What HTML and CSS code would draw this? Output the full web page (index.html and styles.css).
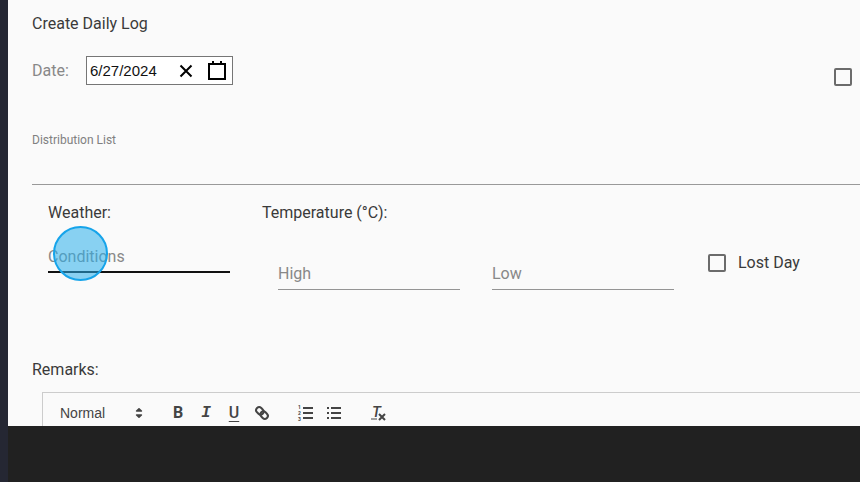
FILE: index.html
```
<!DOCTYPE html>
<html lang="en">
<head>
    <meta charset="UTF-8">
    <meta name="viewport" content="width=device-width, initial-scale=1.0">
    <title>Create Daily Log</title>
    <link rel="stylesheet" href="styles.css">
</head>
<body>
    <main class="page">
        <form class="log-form">
            <h1>Create Daily Log</h1>

            <div class="date-row">
                <label class="date-label" for="logDate">Date:</label>
                <div class="date-picker">
                    <input type="text" id="logDate" value="6/27/2024">
                    <button type="button" aria-label="Clear date">
                        <svg width="14" height="14" viewBox="0 0 14 14"><path d="M1.5 1.5l11 11M12.5 1.5l-11 11" stroke="#000" stroke-width="2" fill="none"/></svg>
                    </button>
                    <button type="button" aria-label="Open calendar">
                        <svg width="18" height="20" viewBox="0 0 18 20"><path d="M1 3h16v15H1z" stroke="#000" stroke-width="2" fill="none"/><path d="M4 0h2v4H4zM12 0h2v4h-2z"/></svg>
                    </button>
                </div>
                <input type="checkbox" class="box date-check" aria-label="Select log">
            </div>

            <div class="distribution">
                <label for="distribution">Distribution List</label>
                <input type="text" id="distribution">
            </div>

            <div class="weather">
                <div class="col">
                    <label for="conditions">Weather:</label>
                    <div class="conditions">
                        <input type="text" class="line-input active" id="conditions" placeholder="Conditions">
                        <span class="click-marker"></span>
                    </div>
                </div>
                <div class="col temperature">
                    <label for="high">Temperature (°C):</label>
                    <input type="text" class="line-input" id="high" placeholder="High">
                </div>
                <div class="col low">
                    <input type="text" class="line-input" id="low" placeholder="Low" aria-label="Low">
                </div>
                <label class="lost-day"><input type="checkbox" class="box"> Lost Day</label>
            </div>

            <h2>Remarks:</h2>
            <div class="editor">
                <div class="toolbar">
                    <div class="format">
                        <select aria-label="Text style">
                            <option>Normal</option>
                            <option>Heading</option>
                        </select>
                        <svg width="8" height="12" viewBox="0 0 8 12"><path d="M1.6 4L4 1.8 6.4 4zM1.6 8L4 10.2 6.4 8z" fill="#444" stroke="#444" stroke-width="1.6" stroke-linejoin="round"/></svg>
                    </div>
                    <div class="tools">
                        <button type="button" class="bold">B</button>
                        <button type="button" class="italic">I</button>
                        <button type="button" class="underline">U</button>
                        <button type="button" aria-label="Link">
                            <svg width="18" height="18" viewBox="0 0 18 18"><g transform="rotate(45 9 9)" fill="none" stroke="#444" stroke-width="2"><rect x="2" y="6" width="8" height="6" rx="3"/><rect x="8" y="6" width="8" height="6" rx="3"/></g></svg>
                        </button>
                    </div>
                    <div class="tools">
                        <button type="button" aria-label="Numbered list">
                            <svg width="18" height="18" viewBox="0 0 18 18"><path d="M6 4h10M6 9h10M6 14h10" stroke="#444" stroke-width="2"/><g class="list-number"><text x="1" y="5">1</text><text x="1" y="11">2</text><text x="1" y="17">3</text></g></svg>
                        </button>
                        <button type="button" aria-label="Bullet list">
                            <svg width="18" height="18" viewBox="0 0 18 18"><path d="M6 4h10M6 9h10M6 14h10M2 4h2M2 9h2M2 14h2" stroke="#444" stroke-width="2"/></svg>
                        </button>
                    </div>
                    <div class="tools">
                        <button type="button" aria-label="Clear formatting">
                            <svg width="18" height="18" viewBox="0 0 18 18"><text x="3" y="13" class="clear-letter">T</text><path d="M2 15h6" stroke="#444" stroke-width="1"/><path d="M10 10l6 6M16 10l-6 6" stroke="#444" stroke-width="2"/></svg>
                        </button>
                    </div>
                </div>
            </div>
        </form>
    </main>
    <footer class="footer"></footer>
</body>
</html>
```
FILE: styles.css
```
* {
    box-sizing: border-box;
}

body {
    display: flex;
    flex-direction: column;
    height: 100vh;
    margin: 0;
    border-left: 8px solid #252733;
    background: #fafafa;
    color: #3a3a3a;
    font-family: Roboto, Arial, sans-serif;
    font-size: 16px;
    line-height: 20px;
}

input,
select,
button {
    padding: 0;
    border: none;
    outline: none;
    background: none;
    color: inherit;
    font: inherit;
}

button {
    display: flex;
    align-items: center;
    justify-content: center;
    cursor: pointer;
}

h1,
h2 {
    margin: 0;
    font-size: 16px;
    font-weight: 400;
}

.page {
    flex: 1;
    min-height: 0;
    overflow: hidden;
}

.log-form {
    padding: 14px 0 0 24px;
}

.date-row {
    display: flex;
    align-items: center;
    margin-top: 22px;
    padding-right: 8px;
}

.date-label {
    width: 54px;
    color: #888;
}

.date-picker {
    display: flex;
    align-items: center;
    height: 29px;
    padding: 0 6px 0 3px;
    border: 1px solid #767676;
    background: #fff;
    color: #111;
    font-family: "Liberation Sans", Arial, sans-serif;
    font-size: 15px;
}

.date-picker input {
    width: 80px;
}

.date-picker button {
    width: 32px;
}

.date-picker button:last-child {
    width: 24px;
    justify-content: flex-end;
}

.box {
    flex: none;
    width: 18px;
    height: 18px;
    margin: 0;
    border: 2px solid #6b6b6b;
    border-radius: 2px;
    appearance: none;
}

.date-check {
    align-self: flex-end;
    margin: 0 0 -1px auto;
}

.distribution {
    margin-top: 45px;
    border-bottom: 1px solid #999;
}

.distribution label {
    display: block;
    color: #808080;
    font-size: 12px;
}

.distribution input {
    display: block;
    width: 100%;
    height: 34px;
}

.weather {
    display: grid;
    grid-template-columns: 214fr 214fr 214fr 170fr;
    padding: 18px 0 0 16px;
}

.col {
    padding-right: 32px;
}

.col label {
    display: block;
}

.line-input {
    display: block;
    width: 100%;
    height: 32px;
    border-bottom: 1px solid #949494;
}

.line-input::placeholder {
    color: #888;
}

.active {
    border-bottom: 2px solid #111;
}

.conditions {
    position: relative;
    margin-top: 18px;
}

.click-marker {
    position: absolute;
    top: -15px;
    left: 5px;
    width: 55px;
    height: 55px;
    border: 2px solid #16a4ea;
    border-radius: 50%;
    background: rgba(41, 174, 235, 0.55);
}

.temperature {
    padding-right: 16px;
}

.temperature .line-input {
    width: calc(100% - 16px);
    margin: 35px 0 0 16px;
}

.low {
    padding: 55px 16px 0;
}

.lost-day {
    display: flex;
    gap: 12px;
    align-items: center;
    align-self: start;
    padding: 50px 0 0 18px;
}

h2 {
    margin-top: 70px;
}

.editor {
    margin: 12px 0 0 10px;
    border: 1px solid #ccc;
    border-right: none;
}

.toolbar {
    display: flex;
    gap: 16px;
    align-items: center;
    height: 40px;
    padding-left: 17px;
    color: #444;
}

.format {
    display: flex;
    align-items: center;
    width: 88px;
    font-family: "Liberation Sans", Arial, sans-serif;
    font-size: 14px;
}

.format select {
    width: 75px;
    appearance: none;
}

.tools {
    display: flex;
}

.tools button {
    width: 28px;
    height: 24px;
}

.bold {
    font-weight: 700;
}

.italic {
    font-family: "Liberation Mono", monospace;
    font-style: italic;
    font-weight: 700;
}

.underline {
    font-weight: 500;
    text-decoration: underline;
    text-decoration-thickness: 1px;
    text-underline-offset: 3px;
}

.list-number {
    fill: #444;
    font-size: 5px;
    font-weight: 700;
}

.clear-letter {
    fill: #444;
    font-size: 15px;
    font-style: italic;
    font-weight: 500;
}

.footer {
    flex: none;
    height: 56px;
    background: #212121;
}
```
